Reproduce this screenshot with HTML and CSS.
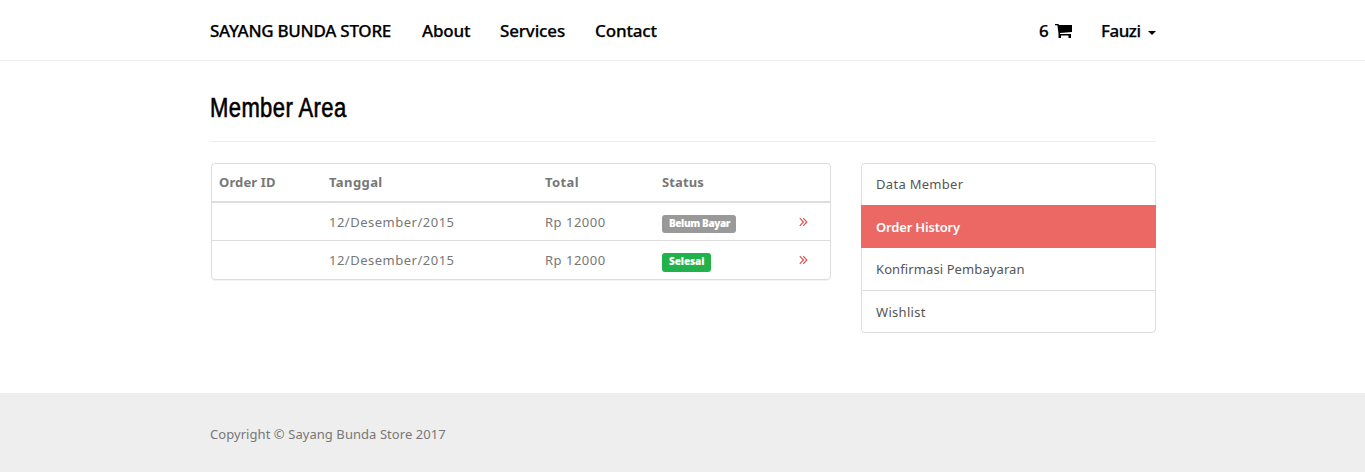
FILE: index.html
```html
<!DOCTYPE html>
<html lang="id">
<head>
<meta charset="utf-8">
<title>Sayang Bunda Store</title>
<link rel="stylesheet" href="styles.css">
</head>
<body>
<header class="navbar">
  <nav class="container nav">
    <a class="brand">SAYANG BUNDA STORE</a>
    <a class="about">About</a>
    <a class="services">Services</a>
    <a class="contact">Contact</a>
    <a class="cart">6
      <svg class="cart-icon" viewBox="0 0 17 14" width="17" height="14"><path d="M0 0h3.500l.5 1H17v7L5 9v1h11v4h-2.500v-2.500H6V14H3.500V9.500L2.400 1.200H0z"/></svg>
    </a>
    <a class="user">Fauzi <span class="caret"></span></a>
  </nav>
</header>
<main class="container">
  <h1 class="page-title"><span class="title-text">Member Area</span></h1>
  <div class="columns">
    <section class="orders">
      <div class="row head"><span>Order ID</span><span class="date-head">Tanggal</span><span class="date-head">Total</span><span>Status</span><span></span></div>
      <div class="row first">
        <span></span><span>12/Desember/2015</span><span class="total">Rp 12000</span>
        <span><b class="label pending">Belum Bayar</b></span>
        <a><svg class="chevrons" viewBox="0 0 9 10" width="9" height="10"><path d="M.8 1.200 4.400 5 .8 8.800M4.200 1.200 7.800 5 4.200 8.800"/></svg></a>
      </div>
      <div class="row last">
        <span></span><span>12/Desember/2015</span><span class="total">Rp 12000</span>
        <span><b class="label done">Selesai</b></span>
        <a><svg class="chevrons" viewBox="0 0 9 10" width="9" height="10"><path d="M.8 1.200 4.400 5 .8 8.800M4.200 1.200 7.800 5 4.200 8.800"/></svg></a>
      </div>
    </section>
    <aside class="menu">
      <a class="item member">Data Member</a>
      <a class="item active">Order History</a>
      <a class="item confirm">Konfirmasi Pembayaran</a>
      <a class="item">Wishlist</a>
    </aside>
  </div>
</main>
<footer class="footer"><div class="container copy">Copyright © Sayang Bunda Store 2017</div></footer>
</body>
</html>
```
FILE: styles.css
```css
* { box-sizing: border-box; }
body { margin: 0; background: #fff; color: #777; font: 13px/20px "Noto Sans", sans-serif; height: 472px; display: flex; flex-direction: column; }
.container { width: 946px; margin: 0 auto; position: relative; left: .5px; }
.navbar { height: 61px; border-bottom: 1px solid #eee; }
.nav { display: flex; align-items: center; height: 60px; padding-top: 2px; color: #000; font-size: 17px; font-weight: 500; letter-spacing: -.15px; white-space: nowrap; -webkit-text-stroke: .25px #000; }
.brand { width: 212px; letter-spacing: -.28px; }
.about { width: 78px; }
.services { width: 95px; }
.contact { flex: 1; }
.cart { width: 62px; display: flex; gap: 6px; }
.cart-icon { margin-top: 3px; }
.user { width: 55px; display: flex; align-items: center; justify-content: space-between; letter-spacing: -.5px; }
.caret { border: 4px solid transparent; border-top-color: #000; border-bottom: 0; margin-top: 3px; }
.page-title { height: 81px; margin: 0 0 21px; padding-top: 31px; border-bottom: 1px solid #eee; color: #000; font: 27px/32px "Liberation Sans", sans-serif; -webkit-text-stroke: .6px #000; }
.title-text { display: inline-block; letter-spacing: .5px; transform: scaleX(.815); transform-origin: left; }
.columns { display: flex; justify-content: space-between; height: 230px; align-items: flex-start; }
.orders { width: 620px; margin-left: 1px; height: 117px; border: 1px solid #ddd; border-radius: 4px; box-shadow: 0 1px 1px rgba(0,0,0,.05); letter-spacing: .5px; }
.row { display: grid; grid-template-columns: 110px 216px 117px 137px 1fr; padding-left: 7px; align-items: center; }
.head { height: 39px; padding-bottom: 2px; border-bottom: 2px solid #ddd; font-weight: 700; letter-spacing: .12px; }
.date-head { letter-spacing: .4px; }
.first { height: 38px; border-bottom: 1px solid #ddd; }
.last { height: 38px; }
.total { letter-spacing: .5px; }
.label { display: block; width: 74px; height: 18px; margin-top: 4px; padding-left: 7px; border-radius: 3px; color: #fff; font: 800 10px/17px "Open Sans", sans-serif; letter-spacing: -.4px; white-space: nowrap; }
.pending { background: #999; }
.done { width: 49px; height: 19px; background: #22b24c; letter-spacing: -.1px; }
.row a { display: flex; }
.chevrons { fill: none; stroke: #d9534f; stroke-width: 1.2; }
.menu { width: 295px; height: 170px; border: 1px solid #ddd; border-radius: 4px; display: grid; grid-template-rows: 41px 43px 43px 41px; color: #555; letter-spacing: .3px; }
.item { display: flex; align-items: center; padding-left: 14px; }
.member { padding-bottom: 1px; }
.confirm { border-bottom: 1px solid #ddd; letter-spacing: .1px; }
.active { margin: 0 -1px; padding-left: 15px; background: #eb6864; color: #fff; font-weight: 600; letter-spacing: -.18px; }
.footer { height: 79px; background: #eee; padding-top: 31px; }
.copy { letter-spacing: .06px; }
```
